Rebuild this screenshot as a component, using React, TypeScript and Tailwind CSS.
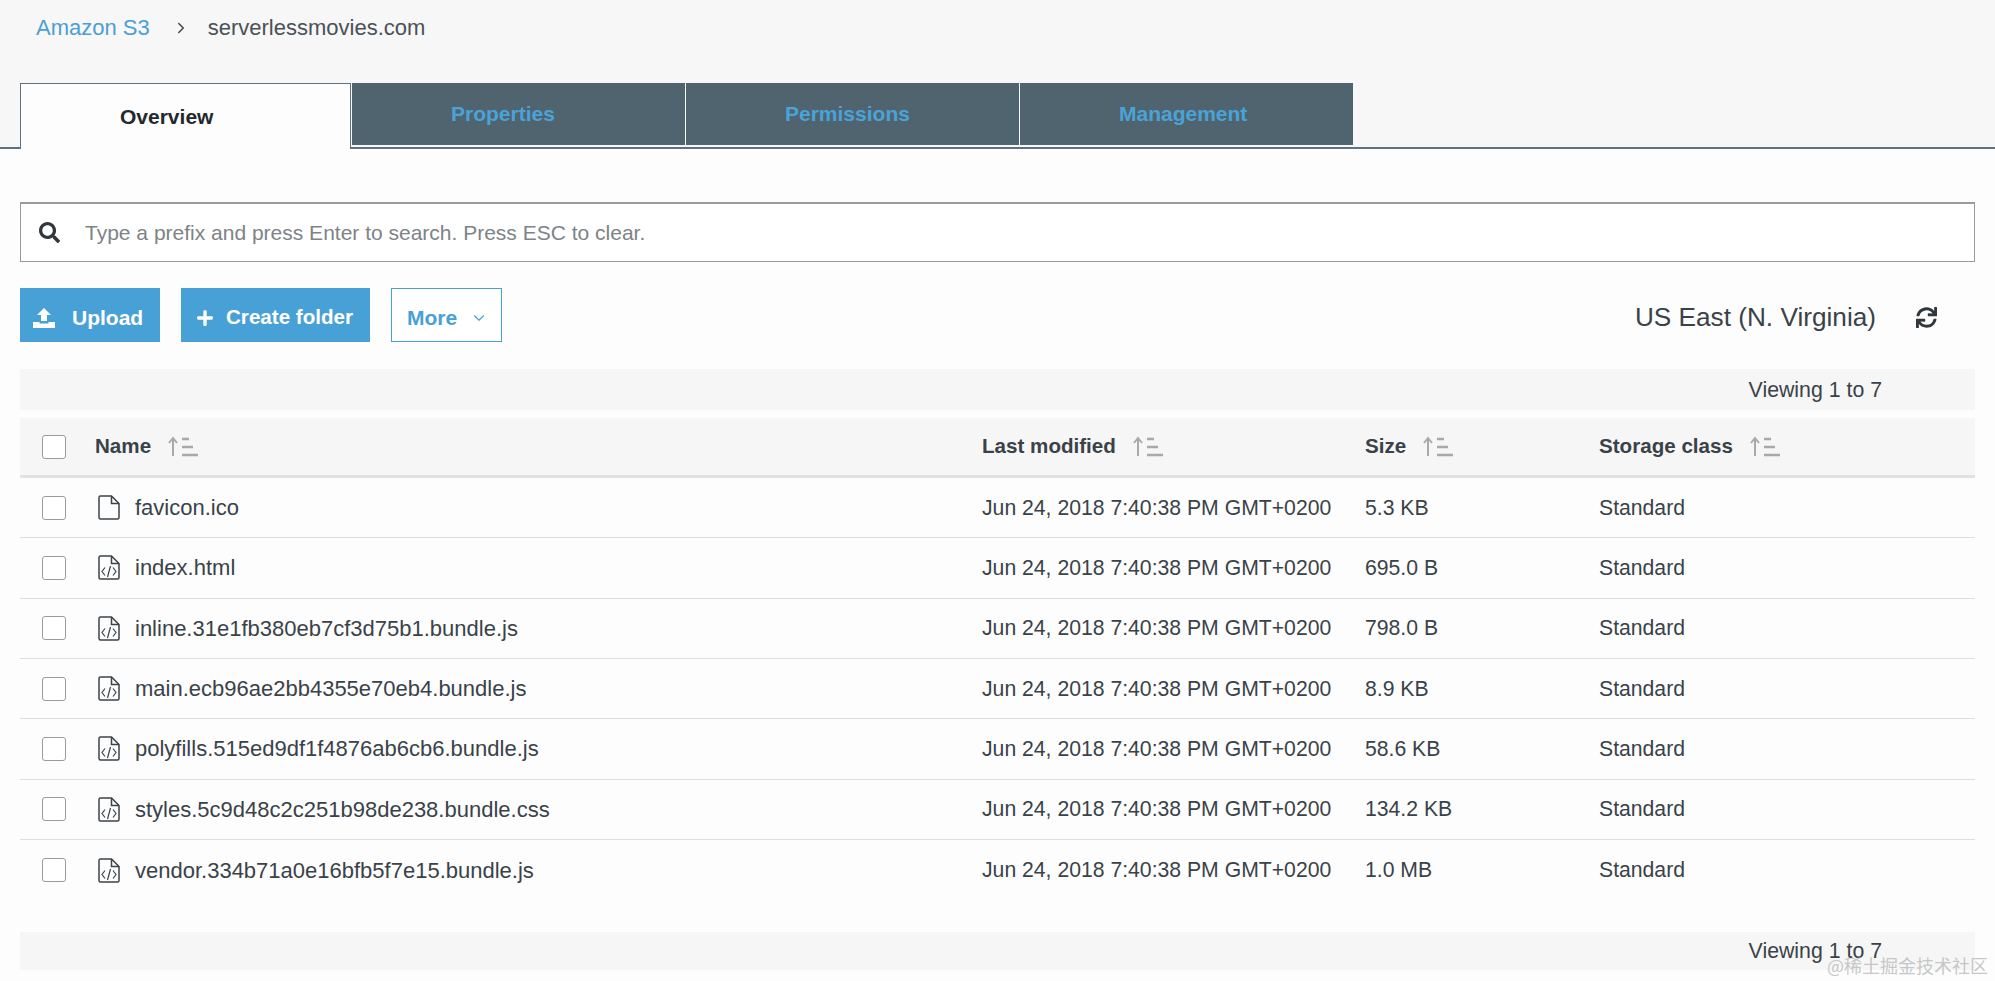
import { ChevronDown, ChevronRight } from "lucide-react";
import { FaPlus, FaSearch, FaSync } from "react-icons/fa";

const files = [
    { name: "favicon.ico", size: "5.3 KB", code: false },
    { name: "index.html", size: "695.0 B", code: true },
    { name: "inline.31e1fb380eb7cf3d75b1.bundle.js", size: "798.0 B", code: true },
    { name: "main.ecb96ae2bb4355e70eb4.bundle.js", size: "8.9 KB", code: true },
    { name: "polyfills.515ed9df1f4876ab6cb6.bundle.js", size: "58.6 KB", code: true },
    { name: "styles.5c9d48c2c251b98de238.bundle.css", size: "134.2 KB", code: true },
    { name: "vendor.334b71a0e16bfb5f7e15.bundle.js", size: "1.0 MB", code: true },
];

const tabs = ["Properties", "Permissions", "Management"];

const SortIcon = () => (
    <svg width="31" height="21" viewBox="0 0 31 21" fill="none" className="text-[#a9a9a9]">
        <path d="M6 20V2M2 7l4-5 4 5" stroke="currentColor" strokeWidth="2" />
        <path d="M15 3h7M15 11h11M15 19h16" stroke="currentColor" strokeWidth="2.500" />
    </svg>
);

const FileIcon = ({ code }: { code: boolean }) => (
    <svg width="22" height="25" viewBox="0 0 22 25" fill="none" stroke="#3c4349" strokeWidth="1.5" className="shrink-0">
        <path d="M2.5 1h11l7.500 7.500V22.500a1.500 1.500 0 0 1-1.500 1.500h-17A1.500 1.500 0 0 1 1 22.500v-20A1.500 1.500 0 0 1 2.500 1z" />
        <path d="M13.500 1v7.500H21" />
        {code && <path d="M7 12.500l-3 4 3 4M15 12.500l3 4-3 4M12.500 11l-3 11" strokeWidth="1.2" />}
    </svg>
);

const UploadIcon = () => (
    <svg width="22" height="20" viewBox="0 0 22 20" fill="white">
        <path d="M11 0l7 7h-4v6H8V7H4z" />
        <path d="M0 14h6.500v1.500h9V14H22v6H0z" />
    </svg>
);

const Checkbox = () => <div className="w-6 h-6 shrink-0 bg-white border border-[#9b9b9b] rounded-[3px]" />;

const ViewingBar = ({ className }: { className: string }) => (
    <div className={`flex items-center justify-end pr-[93px] bg-[#f6f6f6] text-[21.3px] text-[#3a4249] ${className}`}>
        Viewing 1 to 7
    </div>
);

const HeaderCell = ({ label, width }: { label: string; width: string }) => (
    <div className={`flex items-center gap-[16px] font-bold ${width}`}>
        {label}
        <SortIcon />
    </div>
);

const App = () => {
    return (
        <div className="relative w-[1995px] h-[981px] overflow-hidden bg-[#fdfdfd] font-['Liberation_Sans',Arial,sans-serif] text-[#3a4249]">
            <div className="bg-[#f7f7f7]">
                <div className="h-[83px] pt-[14px] pl-[36px] flex items-start text-[22px] leading-[28px]">
                    <span className="text-[#4a9fd4]">Amazon S3</span>
                    <ChevronRight size={18} strokeWidth={2} className="ml-[22px] mr-[18px] mt-[5px] text-[#444]" />
                    <span className="text-[#4a5157]">serverlessmovies.com</span>
                </div>

                <div className="flex h-[66px] pl-[20px] border-b-2 border-[#5f7282]">
                    <div className="w-[331px] h-[66px] pl-[99px] flex items-center bg-[#fdfdfd] border border-b-0 border-[#5f7282] text-[21px] font-bold text-[#23282d]">
                        Overview
                    </div>
                    {tabs.map((tab) => (
                        <div
                            key={tab}
                            className="w-[333px] h-[62px] ml-px pl-[99px] flex items-center bg-[#50646f] text-[21px] font-bold text-[#4aa3d8]"
                        >
                            {tab}
                        </div>
                    ))}
                </div>
            </div>

            <div className="px-[20px] pt-[53px]">
                <div className="h-[60px] flex items-center bg-white border border-[#9a9a9a] border-t-2">
                    <FaSearch size={21} className="ml-[18px] mr-[25px] text-[#30373d]" />
                    <span className="text-[21px] text-[#7d8388]">Type a prefix and press Enter to search. Press ESC to clear.</span>
                </div>

                <div className="flex items-center h-[54px] mt-[26px]">
                    <button type="button" className="w-[140px] h-[54px] flex items-center pl-[13px] pt-[5px] bg-[#48a1d6] text-[21px] font-bold text-white">
                        <UploadIcon />
                        <span className="ml-[17px]">Upload</span>
                    </button>
                    <button type="button" className="w-[189px] h-[54px] ml-[21px] flex items-center pl-[15px] pt-[5px] bg-[#48a1d6] text-[20.6px] font-bold text-white">
                        <FaPlus size={18} />
                        <span className="ml-[12px]">Create folder</span>
                    </button>
                    <button type="button" className="w-[111px] h-[54px] ml-[21px] flex items-center pl-[15px] pt-[5px] bg-white border border-[#48a1d6] text-[21px] font-bold text-[#48a1d6]">
                        More
                        <ChevronDown size={18} strokeWidth={1.5} className="ml-[13px]" />
                    </button>
                    <span className="ml-auto pt-[5px] text-[26.2px]">US East (N. Virginia)</span>
                    <FaSync size={21} className="ml-[40px] mr-[38px] mt-[5px] text-[#30373d]" />
                </div>

                <ViewingBar className="h-[41px] mt-[27px] pt-[3px]" />

                <div className="flex items-center h-[60px] mt-[8px] pl-[22px] bg-[#f6f6f6] border-b-[3px] border-[#e2e2e2] text-[20.6px]">
                    <Checkbox />
                    <div className="flex items-center ml-[29px]">
                        <HeaderCell label="Name" width="w-[887px]" />
                        <HeaderCell label="Last modified" width="w-[383px]" />
                        <HeaderCell label="Size" width="w-[234px]" />
                        <HeaderCell label="Storage class" width="w-[300px]" />
                    </div>
                </div>

                {files.map((file, i) => (
                    <div
                        key={file.name}
                        className={`flex items-center h-[60.33px] pl-[22px] text-[21.2px] ${i < files.length - 1 ? "border-b border-[#dedede]" : ""}`}
                    >
                        <Checkbox />
                        <div className="w-[887px] ml-[29px] pl-[3px] flex items-center">
                            <FileIcon code={file.code} />
                            <span className="ml-[15px] text-[22px]">{file.name}</span>
                        </div>
                        <div className="w-[383px]">Jun 24, 2018 7:40:38 PM GMT+0200</div>
                        <div className="w-[234px]">{file.size}</div>
                        <div>Standard</div>
                    </div>
                ))}

                <ViewingBar className="h-[38px] mt-[32px] pt-[2px]" />
            </div>

            {/* watermark */}
            <div className="absolute right-[7px] bottom-[5px] text-[18px] leading-[22px] text-[#b9b9b9]/80 font-['Noto_Sans_CJK_SC',sans-serif]">
                @稀土掘金技术社区
            </div>
        </div>
    );
};

export default App;
